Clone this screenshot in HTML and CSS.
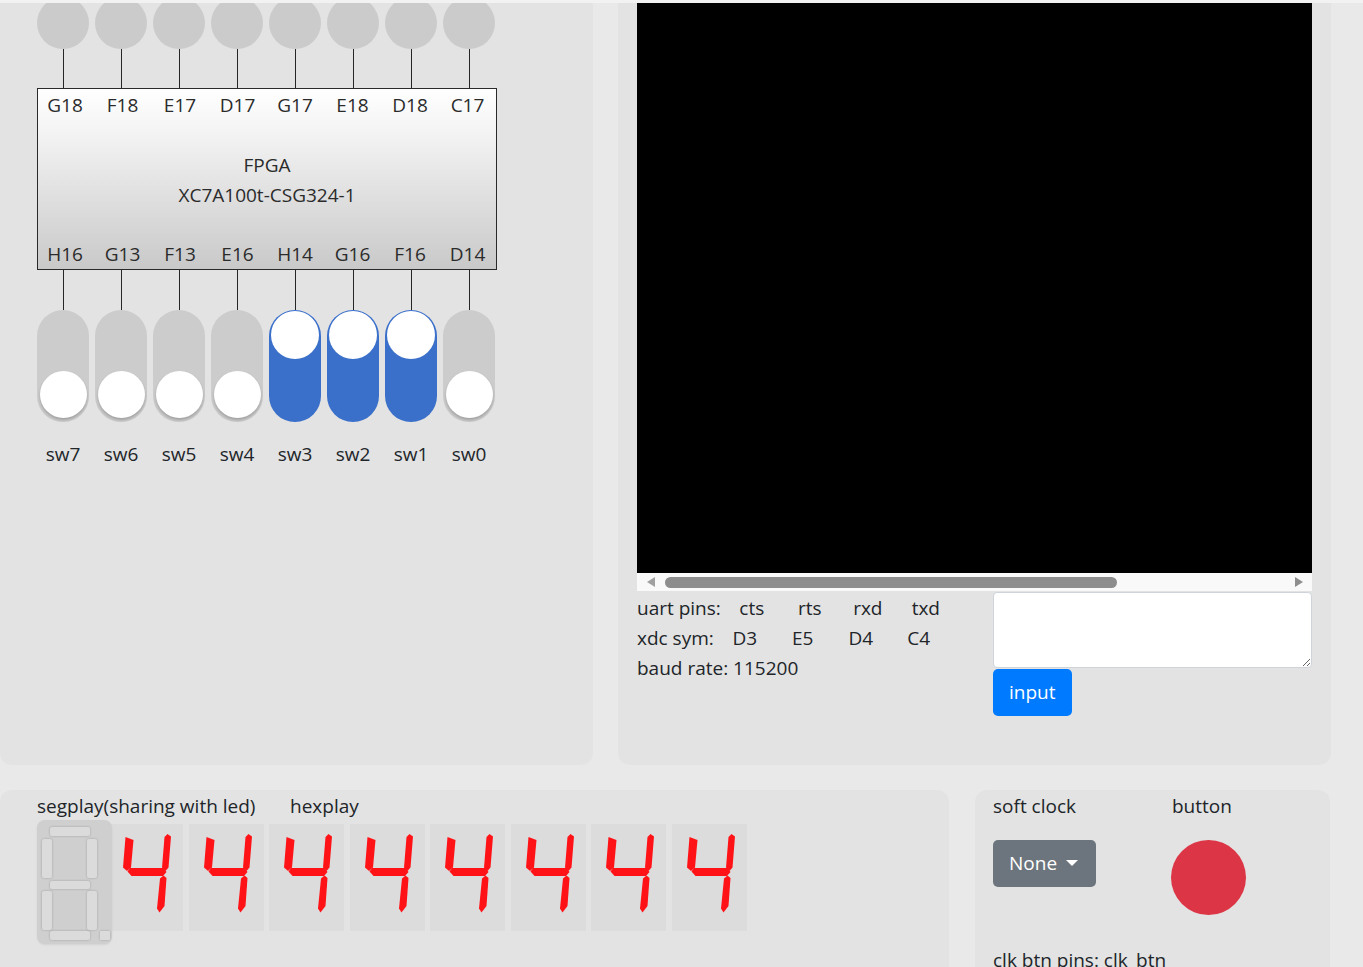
FILE: index.html
```html
<!DOCTYPE html>
<html>
<head>
<meta charset="utf-8">
<link rel="stylesheet" href="styles.css">
</head>
<body>
<div class="row-top">
  <section class="panel top-panel board">
    <div class="grid8 leds">
      <div class="col"><div class="led"></div><div class="wire wire-led"></div></div>
      <div class="col"><div class="led"></div><div class="wire wire-led"></div></div>
      <div class="col"><div class="led"></div><div class="wire wire-led"></div></div>
      <div class="col"><div class="led"></div><div class="wire wire-led"></div></div>
      <div class="col"><div class="led"></div><div class="wire wire-led"></div></div>
      <div class="col"><div class="led"></div><div class="wire wire-led"></div></div>
      <div class="col"><div class="led"></div><div class="wire wire-led"></div></div>
      <div class="col"><div class="led"></div><div class="wire wire-led"></div></div>
    </div>
    <div class="chip">
      <div class="grid8 pins">
        <span>G18</span><span>F18</span><span>E17</span><span>D17</span><span>G17</span><span>E18</span><span>D18</span><span>C17</span>
      </div>
      <div class="chip-name">
        <div>FPGA</div>
        <div>XC7A100t-CSG324-1</div>
      </div>
      <div class="grid8 pins">
        <span>H16</span><span>G13</span><span>F13</span><span>E16</span><span>H14</span><span>G16</span><span>F16</span><span>D14</span>
      </div>
    </div>
    <div class="grid8 switches">
      <div class="col"><div class="wire wire-sw"></div><div class="sw"><div class="knob"></div></div><div class="sw-label">sw7</div></div>
      <div class="col"><div class="wire wire-sw"></div><div class="sw"><div class="knob"></div></div><div class="sw-label">sw6</div></div>
      <div class="col"><div class="wire wire-sw"></div><div class="sw"><div class="knob"></div></div><div class="sw-label">sw5</div></div>
      <div class="col"><div class="wire wire-sw"></div><div class="sw"><div class="knob"></div></div><div class="sw-label">sw4</div></div>
      <div class="col"><div class="wire wire-sw"></div><div class="sw on"><div class="knob"></div></div><div class="sw-label">sw3</div></div>
      <div class="col"><div class="wire wire-sw"></div><div class="sw on"><div class="knob"></div></div><div class="sw-label">sw2</div></div>
      <div class="col"><div class="wire wire-sw"></div><div class="sw on"><div class="knob"></div></div><div class="sw-label">sw1</div></div>
      <div class="col"><div class="wire wire-sw"></div><div class="sw"><div class="knob"></div></div><div class="sw-label">sw0</div></div>
    </div>
  </section>
  <section class="panel top-panel serial">
    <div class="screen"></div>
    <div class="hscroll">
      <span class="arrow-left"></span>
      <span class="thumb"></span>
      <span class="arrow-right"></span>
    </div>
    <div class="uart">
      <div class="uart-info">
        <div class="uart-line"><span class="uart-label">uart pins:</span><span class="cell">cts</span><span class="cell">rts</span><span class="cell">rxd</span><span class="cell">txd</span></div>
        <div class="uart-line"><span class="uart-label">xdc sym:</span><span class="cell">D3</span><span class="cell">E5</span><span class="cell">D4</span><span class="cell">C4</span></div>
        <div class="uart-line">baud rate: 115200</div>
      </div>
      <div class="uart-input">
        <textarea class="uart-text"></textarea>
        <button class="btn btn-primary">input</button>
      </div>
    </div>
  </section>
</div>

<div class="row-bottom">
  <section class="panel bottom-panel seg-panel">
    <div class="seg-heads"><span>segplay(sharing with led)</span><span>hexplay</span></div>
    <div class="seg-row">
      <div class="seg8">
        <svg viewBox="0 0 75 124" width="75" height="124">
          <rect x="13" y="7" width="40" height="9" rx="2"/>
          <rect x="5" y="19" width="10" height="39" rx="2"/>
          <rect x="50" y="19" width="10" height="39" rx="2"/>
          <rect x="13" y="61" width="40" height="8" rx="2"/>
          <rect x="5" y="71" width="10" height="39" rx="2"/>
          <rect x="50" y="71" width="10" height="39" rx="2"/>
          <rect x="13" y="111" width="40" height="9" rx="2"/>
          <rect x="63" y="111" width="10" height="9" rx="1"/>
        </svg>
      </div>
      <div class="hex-digits">
        <div class="hex"><svg viewBox="0 0 75 107" width="75" height="107"><polygon points="17.5,13 25.5,16 23,43.5 19,47 15,43.5"/><polygon points="56.5,13 59.5,10 63,12.5 60.5,43.5 57.5,47 54,43.5"/><polygon points="22,44 55.5,44 58.5,48 55,52 23.5,52 19.5,47.5"/><polygon points="55.5,51.5 58.5,54 56.5,82 51.5,88.5 49,84.5 52,54.5"/></svg></div>
        <div class="hex"><svg viewBox="0 0 75 107" width="75" height="107"><polygon points="17.5,13 25.5,16 23,43.5 19,47 15,43.5"/><polygon points="56.5,13 59.5,10 63,12.5 60.5,43.5 57.5,47 54,43.5"/><polygon points="22,44 55.5,44 58.5,48 55,52 23.5,52 19.5,47.5"/><polygon points="55.5,51.5 58.5,54 56.5,82 51.5,88.5 49,84.5 52,54.5"/></svg></div>
        <div class="hex"><svg viewBox="0 0 75 107" width="75" height="107"><polygon points="17.5,13 25.5,16 23,43.5 19,47 15,43.5"/><polygon points="56.5,13 59.5,10 63,12.5 60.5,43.5 57.5,47 54,43.5"/><polygon points="22,44 55.5,44 58.5,48 55,52 23.5,52 19.5,47.5"/><polygon points="55.5,51.5 58.5,54 56.5,82 51.5,88.5 49,84.5 52,54.5"/></svg></div>
        <div class="hex"><svg viewBox="0 0 75 107" width="75" height="107"><polygon points="17.5,13 25.5,16 23,43.5 19,47 15,43.5"/><polygon points="56.5,13 59.5,10 63,12.5 60.5,43.5 57.5,47 54,43.5"/><polygon points="22,44 55.5,44 58.5,48 55,52 23.5,52 19.5,47.5"/><polygon points="55.5,51.5 58.5,54 56.5,82 51.5,88.5 49,84.5 52,54.5"/></svg></div>
        <div class="hex"><svg viewBox="0 0 75 107" width="75" height="107"><polygon points="17.5,13 25.5,16 23,43.5 19,47 15,43.5"/><polygon points="56.5,13 59.5,10 63,12.5 60.5,43.5 57.5,47 54,43.5"/><polygon points="22,44 55.5,44 58.5,48 55,52 23.5,52 19.5,47.5"/><polygon points="55.5,51.5 58.5,54 56.5,82 51.5,88.5 49,84.5 52,54.5"/></svg></div>
        <div class="hex"><svg viewBox="0 0 75 107" width="75" height="107"><polygon points="17.5,13 25.5,16 23,43.5 19,47 15,43.5"/><polygon points="56.5,13 59.5,10 63,12.5 60.5,43.5 57.5,47 54,43.5"/><polygon points="22,44 55.5,44 58.5,48 55,52 23.5,52 19.5,47.5"/><polygon points="55.5,51.5 58.5,54 56.5,82 51.5,88.5 49,84.5 52,54.5"/></svg></div>
        <div class="hex"><svg viewBox="0 0 75 107" width="75" height="107"><polygon points="17.5,13 25.5,16 23,43.5 19,47 15,43.5"/><polygon points="56.5,13 59.5,10 63,12.5 60.5,43.5 57.5,47 54,43.5"/><polygon points="22,44 55.5,44 58.5,48 55,52 23.5,52 19.5,47.5"/><polygon points="55.5,51.5 58.5,54 56.5,82 51.5,88.5 49,84.5 52,54.5"/></svg></div>
        <div class="hex"><svg viewBox="0 0 75 107" width="75" height="107"><polygon points="17.5,13 25.5,16 23,43.5 19,47 15,43.5"/><polygon points="56.5,13 59.5,10 63,12.5 60.5,43.5 57.5,47 54,43.5"/><polygon points="22,44 55.5,44 58.5,48 55,52 23.5,52 19.5,47.5"/><polygon points="55.5,51.5 58.5,54 56.5,82 51.5,88.5 49,84.5 52,54.5"/></svg></div>
      </div>
    </div>
  </section>
  <section class="panel bottom-panel clk-panel">
    <div class="clk-grid">
      <div class="clk-head">soft clock</div>
      <div class="clk-head">button</div>
      <div><button class="btn btn-secondary">None<span class="caret"></span></button></div>
      <div><div class="red-btn"></div></div>
    </div>
    <div class="clk-pins">clk btn pins: clk_btn</div>
  </section>
</div>
</body>
</html>
```

FILE: styles.css
```css
html, body {
  overflow: hidden;
}
body {
  margin: 0;
  background: #e9e9e9;
  border-top: 3px solid #f2f2f2;
  font-family: "Open Sans", "Noto Sans", "Liberation Sans", sans-serif;
  font-size: 19px;
  line-height: 30px;
  color: #212529;
}

.panel {
  background: #e3e3e3;
  box-sizing: border-box;
}
.top-panel {
  border-radius: 0 0 12px 12px;
  overflow: hidden;
}
.bottom-panel {
  border-radius: 12px 12px 0 0;
  height: 260px;
}

.row-top {
  display: flex;
  gap: 25px;
  height: 762px;
}
.row-bottom {
  display: flex;
  gap: 26px;
  margin-top: 25px;
}

/* ---------- board ---------- */
.board {
  width: 593px;
  padding: 0 37px;
}
.grid8 {
  display: grid;
  grid-template-columns: repeat(8, 52px);
  column-gap: 6px;
}
.col {
  display: flex;
  flex-direction: column;
  align-items: center;
}
.leds {
  margin-top: -6px;
}
.led {
  width: 52px;
  height: 52px;
  border-radius: 50%;
  background: #cbcbcb;
}
.wire {
  width: 1px;
  background: #262626;
}
.wire-led {
  height: 39px;
}
.wire-sw {
  height: 40px;
}

.chip {
  width: 460px;
  box-sizing: border-box;
  border: 1px solid #2a2a2a;
  background: linear-gradient(#ffffff, #f3f3f3 25%, #c9c9c9);
  color: #2b2b2b;
}
.chip .pins {
  padding-left: 1px;
  text-align: center;
  height: 30px;
  padding-top: 1px;
  column-gap: 5.5px;
}
.chip-name {
  padding: 30px 0 28px;
  text-align: center;
}

.sw {
  width: 52px;
  height: 112px;
  border-radius: 26px;
  background: #cccccc;
  box-sizing: border-box;
  padding: 2px 2.5px 4px;
  display: flex;
  flex-direction: column;
  justify-content: flex-end;
}
.sw.on {
  background: #3a6fca;
  justify-content: flex-start;
  padding: 1px 2px;
}
.knob {
  width: 47px;
  height: 47px;
  border-radius: 50%;
  background: #ffffff;
  box-shadow: 0 2px 3px rgba(0, 0, 0, 0.22);
}
.sw.on .knob {
  width: 48px;
  height: 48px;
  box-shadow: none;
}
.sw-label {
  margin-top: 17px;
}

/* ---------- serial ---------- */
.serial {
  width: 713px;
  padding: 0 19px;
}
.screen {
  height: 570px;
  background: #000;
}
.hscroll {
  height: 18px;
  background: #f9f9f9;
  display: flex;
  align-items: center;
  padding: 0 9px 0 10px;
}
.arrow-left {
  width: 0;
  height: 0;
  border-top: 5px solid transparent;
  border-bottom: 5px solid transparent;
  border-right: 8px solid #a0a0a0;
}
.arrow-right {
  width: 0;
  height: 0;
  margin-left: auto;
  border-top: 5px solid transparent;
  border-bottom: 5px solid transparent;
  border-left: 8px solid #8e8e8e;
}
.thumb {
  width: 452px;
  height: 11px;
  margin-left: 10px;
  border-radius: 6px;
  background: #8d8d8d;
}
.uart {
  display: grid;
  grid-template-columns: 356px 1fr;
  margin-top: 1px;
}
.uart-info {
  padding-top: 1px;
}
.uart-label {
  display: inline-block;
  margin-right: 2px;
}
.cell {
  display: inline-block;
  width: 58px;
  text-align: center;
}
.uart-text {
  display: block;
  width: 100%;
  height: 76px;
  box-sizing: border-box;
  border: 1px solid #ced4da;
  border-radius: 4px;
  background: #fff;
  margin: 0;
}
.btn {
  font-family: inherit;
  font-size: 19px;
  line-height: 30px;
  border: none;
  border-radius: 5px;
  padding: 8px 16px 9px;
  color: #fff;
  cursor: pointer;
}
.btn-primary {
  background: #007bff;
  margin-top: 1px;
}
.btn-secondary {
  background: #6c757d;
  display: inline-flex;
  align-items: center;
  padding-right: 18px;
}
.caret {
  display: inline-block;
  margin-left: 9px;
  border-top: 6px solid #fff;
  border-left: 6px solid transparent;
  border-right: 6px solid transparent;
}

/* ---------- seg ---------- */
.seg-panel {
  width: 949px;
  padding: 1px 37px 0;
}
.seg-heads {
  display: grid;
  grid-template-columns: 253px auto;
}
.seg-row {
  display: flex;
  align-items: flex-start;
  margin-top: -1px;
}
.seg8 {
  position: relative;
  z-index: 1;
  width: 75px;
  height: 124px;
  border-radius: 8px;
  background: #cfcfcf;
  box-shadow: 0 1px 2px rgba(0, 0, 0, 0.08);
}
.seg8 svg {
  display: block;
}
.seg8 rect {
  fill: #dbdbdb;
  filter: drop-shadow(0 0 1px rgba(0, 0, 0, 0.22));
}
.hex-digits {
  display: flex;
  gap: 5.5px;
  margin-left: -4px;
  margin-top: 4px;
}
.hex {
  width: 75px;
  height: 107px;
  background: #dcdcdc;
}
.hex svg {
  display: block;
}
.hex polygon {
  fill: #ff1317;
}

/* ---------- clock ---------- */
.clk-panel {
  width: 355px;
  padding: 1px 18px 0;
}
.clk-grid {
  display: grid;
  grid-template-columns: 179px 1fr;
  row-gap: 19px;
}
.red-btn {
  width: 75px;
  height: 75px;
  border-radius: 50%;
  background: #dc3545;
  margin-left: -1px;
}
.clk-pins {
  margin-top: 30px;
}
```
